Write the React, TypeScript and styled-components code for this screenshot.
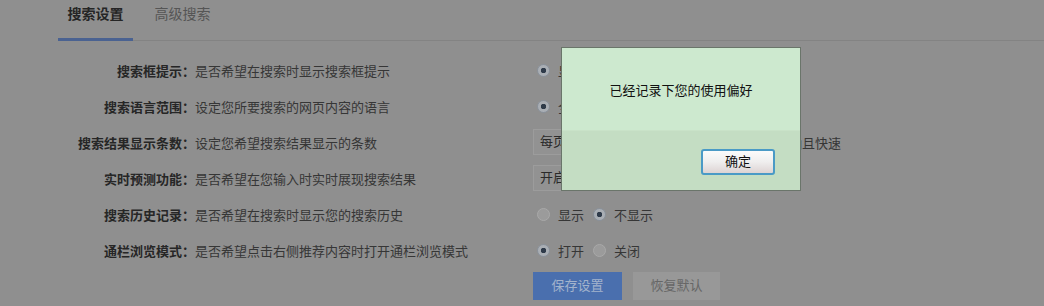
import styled, { createGlobalStyle } from "styled-components";

const GlobalStyle = createGlobalStyle`
  html, body {
    margin: 0;
    padding: 0;
    background: #8f8f8f;
    font-family: "Liberation Sans", "Noto Sans CJK SC", sans-serif;
    font-size: 13px;
  }
`;

interface IOption {
  text: string;
  checked: boolean;
}

interface IRow {
  label: string;
  desc: string;
  options?: IOption[];
  select?: string;
  note?: string;
}

const rows: IRow[] = [
  {
    label: "搜索框提示：",
    desc: "是否希望在搜索时显示搜索框提示",
    options: [
      { text: "显示", checked: true },
      { text: "不显示", checked: false },
    ],
  },
  {
    label: "搜索语言范围：",
    desc: "设定您所要搜索的网页内容的语言",
    options: [
      { text: "全部语言", checked: true },
      { text: "仅简体中文", checked: false },
    ],
  },
  {
    label: "搜索结果显示条数：",
    desc: "设定您希望搜索结果显示的条数",
    select: "每页10条",
    note: "搜索结果显示更准确且快速",
  },
  {
    label: "实时预测功能：",
    desc: "是否希望在您输入时实时展现搜索结果",
    select: "开启",
  },
  {
    label: "搜索历史记录：",
    desc: "是否希望在搜索时显示您的搜索历史",
    options: [
      { text: "显示", checked: false },
      { text: "不显示", checked: true },
    ],
  },
  {
    label: "通栏浏览模式：",
    desc: "是否希望点击右侧推荐内容时打开通栏浏览模式",
    options: [
      { text: "打开", checked: true },
      { text: "关闭", checked: false },
    ],
  },
];

const App: React.FC = () => {
  return (
    <>
      <GlobalStyle />
      <Page>
        <Tabs>
          <Tab active>搜索设置</Tab>
          <Tab>高级搜索</Tab>
        </Tabs>
        <Form>
          {rows.map((row) => (
            <Row key={row.label}>
              <Label>{row.label}</Label>
              <Desc>{row.desc}</Desc>
              <Control>
                {row.options &&
                  row.options.map((opt) => (
                    <Option key={opt.text}>
                      <Radio checked={opt.checked} />
                      {opt.text}
                    </Option>
                  ))}
                {row.select && <Select>{row.select}</Select>}
                {row.note && <Note>{row.note}</Note>}
              </Control>
            </Row>
          ))}
          <Actions>
            <SaveButton>保存设置</SaveButton>
            <ResetButton>恢复默认</ResetButton>
          </Actions>
        </Form>

        <Dialog>
          <DialogBody>已经记录下您的使用偏好</DialogBody>
          <DialogFooter>
            <OkButton>确定</OkButton>
          </DialogFooter>
        </Dialog>
      </Page>
    </>
  );
};

export default App;

const Page = styled.div`
  position: relative;
  width: 1044px;
  height: 306px;
  overflow: hidden;
  padding-left: 58px;
  box-sizing: border-box;
`;

const Tabs = styled.div`
  display: flex;
  height: 40px;
  border-bottom: 1px solid #838383;
`;

const Tab = styled.div<{ active?: boolean }>`
  width: 75px;
  padding-top: 4px;
  line-height: 20px;
  font-size: 14px;
  text-align: center;
  box-sizing: border-box;
  color: ${(p) => (p.active ? "#252525" : "#555")};
  font-weight: ${(p) => (p.active ? "bold" : "normal")};
  border-bottom: ${(p) => (p.active ? "3px solid #4a6291" : "none")};
  margin-bottom: ${(p) => (p.active ? "-1px" : "0")};
  & + & {
    margin-left: 12px;
  }
`;

const Form = styled.div`
  padding-top: 11px;
`;

const Row = styled.div`
  display: flex;
  align-items: center;
  height: 36px;
`;

const Label = styled.div`
  width: 137px;
  text-align: right;
  font-weight: bold;
  color: #262626;
  white-space: nowrap;
`;

const Desc = styled.div`
  width: 338px;
  color: #363636;
  white-space: nowrap;
`;

const Control = styled.div`
  display: flex;
  align-items: center;
  color: #363636;
  white-space: nowrap;
`;

const Option = styled.label`
  display: flex;
  align-items: center;
  margin-right: 5px;
`;

const Radio = styled.span<{ checked: boolean }>`
  width: 13px;
  height: 13px;
  margin: 0 8px 0 4px;
  border-radius: 50%;
  box-sizing: border-box;
  border: 1px solid ${(p) => (p.checked ? "#8a929c" : "#a9a9a9")};
  background: ${(p) =>
    p.checked
      ? "radial-gradient(circle, #2f3b4a 0 2.5px, #a9aeb4 3px)"
      : "#9b9b9b"};
`;

const Select = styled.div`
  width: 120px;
  height: 26px;
  line-height: 24px;
  padding-left: 6px;
  box-sizing: border-box;
  background: #929292;
  border: 1px solid #9c9c9c;
  color: #2a2a2a;
`;

const Note = styled.span`
  margin-left: 32px;
`;

const Actions = styled.div`
  display: flex;
  gap: 11px;
  margin: 4px 0 0 475px;
`;

const SaveButton = styled.div`
  width: 89px;
  height: 28px;
  line-height: 28px;
  text-align: center;
  background: #4a6fae;
  color: #a3b3cc;
`;

const ResetButton = styled.div`
  width: 87px;
  height: 28px;
  line-height: 28px;
  text-align: center;
  background: #989898;
  color: #666;
`;

const Dialog = styled.div`
  position: absolute;
  left: 561px;
  top: 47px;
  width: 240px;
  height: 144px;
  box-sizing: border-box;
  border: 1px solid #6a756a;
  display: flex;
  flex-direction: column;
`;

const DialogBody = styled.div`
  height: 82px;
  display: flex;
  align-items: center;
  justify-content: center;
  background: #cde9cf;
  color: #111;
`;

const DialogFooter = styled.div`
  flex: 1;
  display: flex;
  align-items: center;
  justify-content: flex-end;
  padding-right: 25px;
  background: #c4ddc3;
  border-top: 1px solid #c9e2c8;
`;

const OkButton = styled.div`
  width: 74px;
  height: 26px;
  box-sizing: border-box;
  border: 2px solid #4a9ac6;
  border-radius: 3px;
  background: linear-gradient(#fbfbfb, #efeeee 50%, #ddd3d3);
  color: #111;
  text-align: center;
  line-height: 22px;
  margin-top: 2px;
`;
